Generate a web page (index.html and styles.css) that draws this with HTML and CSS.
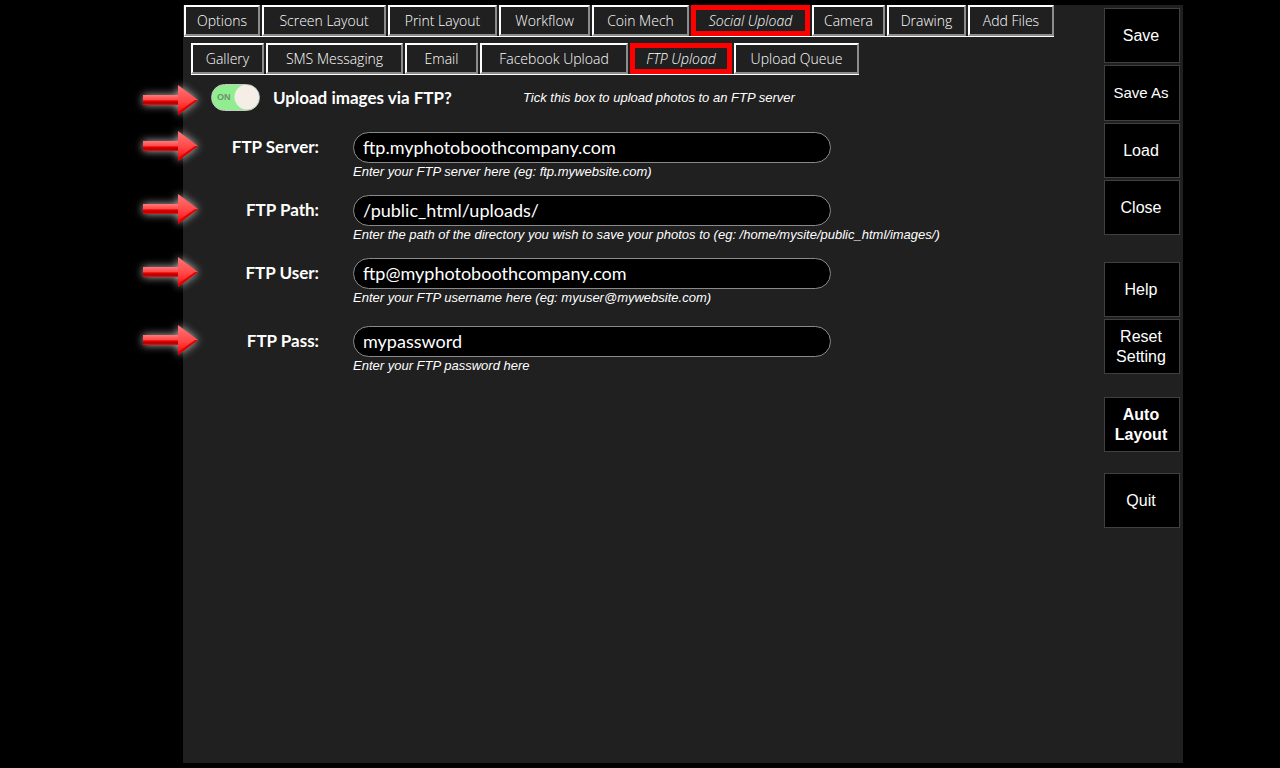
FILE: index.html
```html
<!DOCTYPE html>
<html lang="en">
<head>
    <meta charset="UTF-8">
    <title>FTP Upload</title>
    <link rel="stylesheet" href="styles.css">
</head>
<body>
<svg class="defs" width="0" height="0">
    <defs>
        <linearGradient id="red" x1="0" y1="0" x2="0" y2="1">
            <stop offset="0" stop-color="#ff7474"/>
            <stop offset="0.5" stop-color="#ff4c4c"/>
            <stop offset="0.7" stop-color="#ff3030"/>
            <stop offset="1" stop-color="#d80000"/>
        </linearGradient>
        <linearGradient id="shaft" x1="0" y1="0" x2="0" y2="1">
            <stop offset="0" stop-color="#ff7878"/>
            <stop offset="0.45" stop-color="#ff4c4c"/>
            <stop offset="0.6" stop-color="#f00000"/>
            <stop offset="0.8" stop-color="#a80000"/>
            <stop offset="1" stop-color="#f01010"/>
        </linearGradient>
        <symbol id="arrow" viewBox="0 0 70 46">
            <path d="M8 18H43V8L63 23L43 38V28H8Z" fill="url(#red)"/>
            <path d="M8 18H43V28H8Z" fill="url(#shaft)"/>
            <path d="M43 35L60 23L63 23L43 38Z" fill="#e00000"/>
        </symbol>
    </defs>
</svg>
<div class="app">
    <div class="main">
        <nav class="tabs top">
            <button>Options</button>
            <button>Screen Layout</button>
            <button>Print Layout</button>
            <button>Workflow</button>
            <button>Coin Mech</button>
            <button class="selected">Social Upload</button>
            <button>Camera</button>
            <button>Drawing</button>
            <button>Add Files</button>
        </nav>
        <nav class="tabs sub">
            <button>Gallery</button>
            <button>SMS Messaging</button>
            <button>Email</button>
            <button>Facebook Upload</button>
            <button class="selected">FTP Upload</button>
            <button>Upload Queue</button>
        </nav>
        <form>
            <div class="enable">
                <svg class="arrow"><use href="#arrow"/></svg>
                <label class="switch">
                    <input type="checkbox" id="enable" checked>
                    <span>ON</span>
                </label>
                <label class="title" for="enable">Upload images via FTP?</label>
                <p class="hint">Tick this box to upload photos to an FTP server</p>
            </div>
            <div class="row">
                <svg class="arrow"><use href="#arrow"/></svg>
                <label for="server">FTP Server:</label>
                <input type="text" id="server" value="ftp.myphotoboothcompany.com">
                <p class="hint">Enter your FTP server here (eg: ftp.mywebsite.com)</p>
            </div>
            <div class="row">
                <svg class="arrow"><use href="#arrow"/></svg>
                <label for="path">FTP Path:</label>
                <input type="text" id="path" value="/public_html/uploads/">
                <p class="hint">Enter the path of the directory you wish to save your photos to (eg: /home/mysite/public_html/images/)</p>
            </div>
            <div class="row">
                <svg class="arrow"><use href="#arrow"/></svg>
                <label for="user">FTP User:</label>
                <input type="text" id="user" value="ftp@myphotoboothcompany.com">
                <p class="hint">Enter your FTP username here (eg: myuser@mywebsite.com)</p>
            </div>
            <div class="row last">
                <svg class="arrow"><use href="#arrow"/></svg>
                <label for="pass">FTP Pass:</label>
                <input type="text" id="pass" value="mypassword">
                <p class="hint">Enter your FTP password here</p>
            </div>
        </form>
    </div>
    <div class="side">
        <button>Save</button>
        <button class="small">Save As</button>
        <button>Load</button>
        <button>Close</button>
        <button class="help">Help</button>
        <button>Reset Setting</button>
        <button class="auto">Auto Layout</button>
        <button class="quit">Quit</button>
    </div>
</div>
</body>
</html>
```
FILE: styles.css
```css
*{
    margin: 0;
    padding: 0;
    box-sizing: border-box;
}
body{
    background: #000;
    color: #fff;
    padding: 5px 97px 5px 183px;
    font-family: "Liberation Sans", sans-serif;
}
.defs{
    position: absolute;
}
.app{
    display: flex;
    justify-content: space-between;
    min-height: calc(100vh - 10px);
    background: #202020;
}
.main{
    flex: 1;
}

/* tabs */
.tabs{
    display: grid;
    gap: 2px;
    width: max-content;
    height: 32px;
    border-bottom: 1px solid #fff;
}
.top{
    grid-template-columns: 76px 124px 109px 91px 97px 119px 73px 79px 86px;
    margin-left: 1px;
}
.sub{
    grid-template-columns: 73px 137px 73px 148px 102px 125px;
    margin: 6px 0 0 8px;
}
.tabs button{
    background: #202020;
    color: #fff;
    border: 2px solid;
    border-color: #fff #8c8c8c #8c8c8c #fff;
    font: 300 14px "Open Sans", sans-serif;
    white-space: nowrap;
}
.tabs button.selected{
    border: 5px solid #f00;
    font-style: italic;
}

/* form */
.enable{
    position: relative;
    display: flex;
    align-items: center;
    height: 27px;
    margin: 9px 0 21px 28px;
}
.arrow{
    position: absolute;
    left: -76px;
    width: 70px;
    height: 46px;
    filter: drop-shadow(0 0 4px #bbb);
}
.enable .arrow{
    top: -7px;
}
.switch{
    position: relative;
    width: 49px;
    height: 27px;
}
.switch input{
    appearance: none;
    display: block;
    width: 49px;
    height: 27px;
    border: 1px solid #c8c8c8;
    border-radius: 14px;
    background: radial-gradient(circle at 35px 12px, #f5eee6 12px, #90ee90 13px);
}
.switch span{
    position: absolute;
    left: 6px;
    top: 7px;
    font: bold 9px/12px "Liberation Sans", sans-serif;
    color: #6f8f6f;
}
.title{
    width: 263px;
    padding-left: 13px;
    font: bold 17px Lato, sans-serif;
}
.hint{
    font-size: 13px;
    line-height: 16px;
    font-style: italic;
    white-space: nowrap;
}
.row{
    position: relative;
    display: grid;
    grid-template-columns: 91px minmax(0, 478px);
    column-gap: 34px;
    row-gap: 1px;
    align-items: center;
    margin: 0 0 15px 45px;
}
.row .arrow{
    left: -93px;
    top: -9px;
}
.row label{
    padding-bottom: 2px;
    text-align: right;
    font: bold 17px Lato, sans-serif;
}
.row input{
    height: 31px;
    padding: 0 9px 2px;
    border: 1px solid #8a8a8a;
    border-radius: 16px;
    background: #000;
    color: #fff;
    font: 18px Lato, sans-serif;
}
.row .hint{
    grid-column: 2;
}
.last{
    margin-top: 20px;
}

/* right hand buttons */
.side{
    display: flex;
    flex-direction: column;
    gap: 2px;
    width: 76px;
    margin: 3px 3px 0 0;
}
.side button{
    height: 55px;
    padding-right: 2px;
    background: #000;
    color: #fff;
    border: 1px solid #404040;
    font: 16px/20px "Liberation Sans", sans-serif;
}
.side .small{
    height: 56px;
    font-size: 15px;
}
.side .help{
    margin-top: 25px;
}
.side .auto{
    margin-top: 21px;
    font-weight: bold;
}
.side .quit{
    margin-top: 19px;
}
```
